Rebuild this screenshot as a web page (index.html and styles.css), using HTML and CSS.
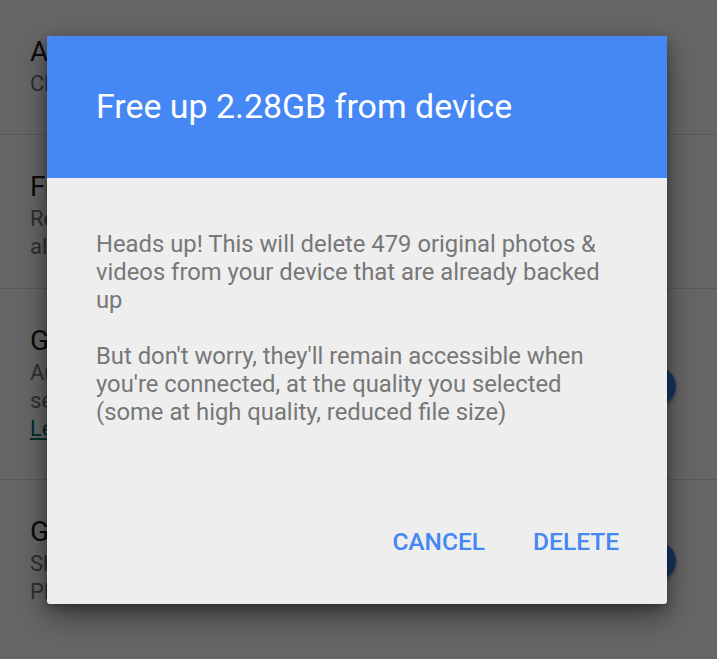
FILE: index.html
```html
<!DOCTYPE html>
<html>
<head>
<meta charset="utf-8">
<link rel="stylesheet" href="styles.css">
</head>
<body>
<main class="settings">
  <section class="row row-1">
    <div class="row-text">
      <div class="row-title">Assistant cards</div>
      <div class="row-sub">Choose which cards you'd like to see</div>
    </div>
  </section>
  <section class="row row-2">
    <div class="row-text">
      <div class="row-title">Free up device storage</div>
      <div class="row-sub">Remove items from device that are<br>already backed up</div>
    </div>
  </section>
  <section class="row row-3">
    <div class="row-text">
      <div class="row-title">Group similar faces</div>
      <div class="row-sub">Automatically group similar faces so you can<br>search for people in your photos<br><a class="link" href="#">Learn more</a></div>
    </div>
    <span class="switch"><span class="thumb"></span></span>
  </section>
  <section class="row row-4">
    <div class="row-text">
      <div class="row-title">Google Drive</div>
      <div class="row-sub">Show Google Drive photos &amp; videos in your<br>Photos library</div>
    </div>
    <span class="switch"><span class="thumb"></span></span>
  </section>
</main>

<div class="scrim"></div>

<div class="dialog" role="dialog">
  <header class="dialog-head">
    <h1 class="dialog-title">Free up 2.28GB from device</h1>
  </header>
  <div class="dialog-body">
    <p class="dialog-text">Heads up! This will delete 479 original photos &amp; videos from your device that are already backed up</p>
    <p class="dialog-text">But don't worry, they'll remain accessible when you're connected, at the quality you selected (some at high quality, reduced file size)</p>
  </div>
  <footer class="dialog-actions">
    <button class="btn">CANCEL</button>
    <button class="btn">DELETE</button>
  </footer>
</div>
</body>
</html>
```

FILE: styles.css
```css
html, body {
  margin: 0;
  padding: 0;
}
body {
  width: 717px;
  height: 659px;
  overflow: hidden;
  background: #ffffff;
  font-family: Roboto, "Noto Sans", sans-serif;
  position: relative;
}
.settings {
  display: flex;
  flex-direction: column;
}
.row {
  display: flex;
  align-items: flex-start;
  padding: 34px 0 36px 30px;
  border-bottom: 1px solid #e0e0e0;
  position: relative;
}
.row-2 { padding-bottom: 27px; }
.row-4 { border-bottom: none; }
.row-text {
  flex: 1;
  white-space: nowrap;
}
.row-title {
  font-size: 28px;
  line-height: 36px;
  color: #212121;
}
.row-sub {
  font-size: 22px;
  line-height: 28px;
  color: #757575;
}
.link {
  color: #00796b;
  text-decoration: underline;
}
.switch {
  position: absolute;
  right: 39px;
  top: 78px;
  width: 40px;
  height: 40px;
}
.thumb {
  display: block;
  width: 38px;
  height: 38px;
  border-radius: 50%;
  background: #4285f4;
  box-shadow: 0 2px 4px rgba(0,0,0,0.35);
}
.row-4 .switch { top: 62px; }

.scrim {
  position: absolute;
  inset: 0;
  background: rgba(0,0,0,0.6);
}
.dialog {
  position: absolute;
  left: 47px;
  top: 36px;
  width: 620px;
  height: 568px;
  background: #eeeeee;
  border-radius: 3px;
  overflow: hidden;
  box-shadow: 0 12px 30px rgba(0,0,0,0.45), 0 4px 10px rgba(0,0,0,0.25);
  display: flex;
  flex-direction: column;
}
.dialog-head {
  height: 142px;
  background: #4487f5;
  display: flex;
  align-items: center;
  padding: 0 49px;
  box-sizing: border-box;
  flex: none;
}
.dialog-title {
  margin: 0;
  font-size: 33.9px;
  font-weight: 400;
  color: #ffffff;
  line-height: 36px;
  white-space: nowrap;
}
.dialog-body {
  padding: 52px 40px 0 49px;
  flex: 1;
}
.dialog-text {
  margin: 0 0 28px 0;
  font-size: 23.8px;
  line-height: 28px;
  color: #777777;
}
.dialog-actions {
  display: flex;
  justify-content: flex-end;
  gap: 48px;
  padding: 0 48px 48px 0;
}
.btn {
  border: none;
  background: none;
  padding: 0;
  font-family: Roboto, "Noto Sans", sans-serif;
  font-weight: 500;
  font-size: 24.5px;
  line-height: 28px;
  color: #4487f5;
}
```
